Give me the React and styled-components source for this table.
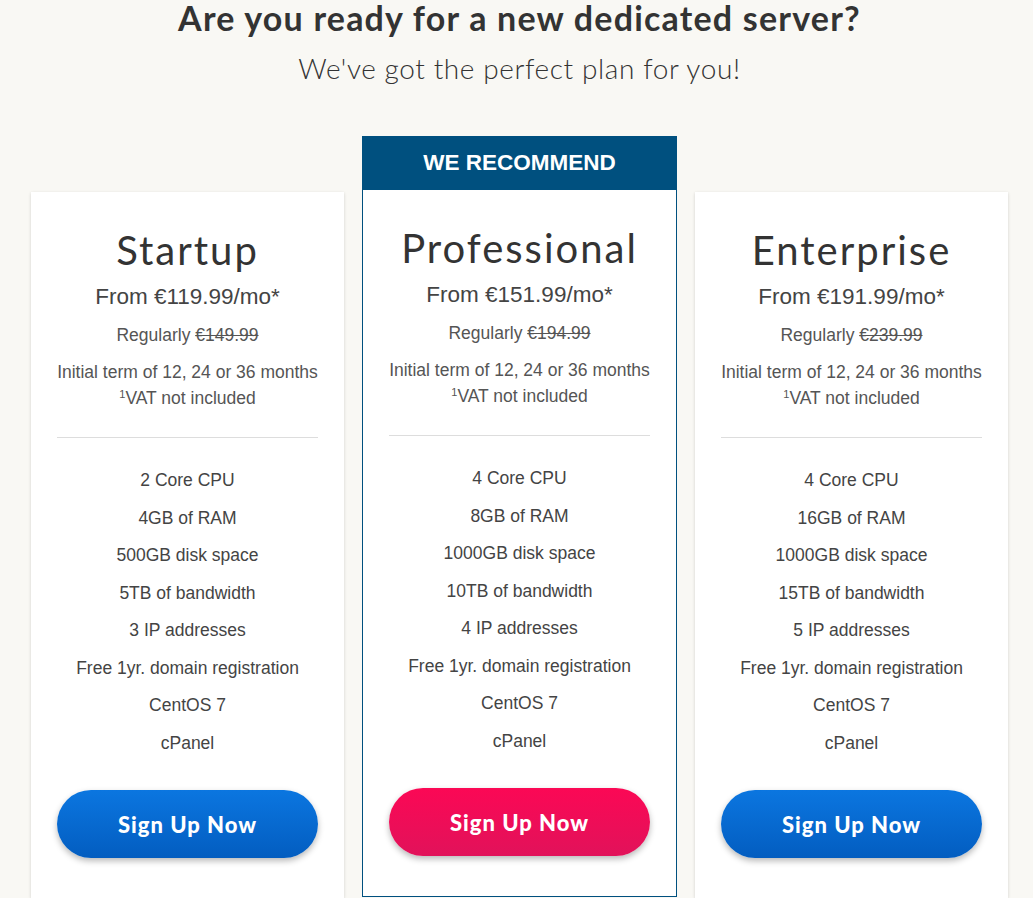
import React from 'react';
import styled, { createGlobalStyle } from 'styled-components';

const GlobalStyle = createGlobalStyle`
  html, body {
    margin: 0;
    padding: 0;
    background: #f9f8f4;
    overflow: hidden;
  }
  * {
    box-sizing: border-box;
  }
`;

const Page = styled.div`
  width: 1033px;
  height: 898px;
  overflow: hidden;
  padding: 0 25px 0 31px;
`;

const Heading = styled.h1`
  margin: -4px 0 0;
  font-family: 'Lato', 'Liberation Sans', sans-serif;
  font-weight: 700;
  font-size: 34px;
  line-height: 44px;
  color: #333;
  text-align: center;
  letter-spacing: 1.2px;
`;

const SubHeading = styled.h2`
  margin: 10px 0 0;
  font-family: 'Lato', 'Liberation Sans', sans-serif;
  font-weight: 300;
  font-size: 28px;
  line-height: 36px;
  color: #333;
  text-align: center;
  letter-spacing: 0.6px;
`;

const PlanRow = styled.div`
  margin-top: 50px;
  display: grid;
  grid-template-columns: 313px 315px 313px;
  gap: 18px;
  align-items: start;
`;

const Card = styled.div`
  background: #fff;
  margin-top: ${p => (p.$featured ? '0' : '56px')};
  border: ${p => (p.$featured ? '1px solid #00507f' : 'none')};
  box-shadow: ${p => (p.$featured ? 'none' : '0 1px 3px rgba(0, 0, 0, 0.16)')};
`;

const Banner = styled.div`
  height: 54px;
  margin: -1px -1px 0;
  background: #00507f;
  color: #fff;
  font-family: 'Liberation Sans', Arial, sans-serif;
  font-weight: 700;
  font-size: 22.5px;
  display: flex;
  align-items: center;
  justify-content: center;
`;

const Body = styled.div`
  padding: 34px 26px 40px;
  text-align: center;
  font-family: 'Liberation Sans', Arial, sans-serif;
`;

const Title = styled.h3`
  margin: 0;
  font-family: 'Lato', 'Liberation Sans', sans-serif;
  font-weight: 400;
  font-size: 40px;
  line-height: 48px;
  letter-spacing: 2px;
  color: #333;
`;

const Price = styled.div`
  margin-top: 8px;
  font-size: 22.5px;
  line-height: 29px;
  color: #444;
`;

const Regular = styled.div`
  margin-top: 12px;
  font-size: 17.5px;
  line-height: 24px;
  color: #555;

  s {
    color: #555;
  }
`;

const Terms = styled.div`
  margin-top: 12px;
  font-size: 17.5px;
  line-height: 26px;
  color: #555;

  sup {
    font-size: 11px;
    line-height: 0;
    vertical-align: 6px;
  }
`;

const Divider = styled.hr`
  margin: 26px 0 0;
  border: none;
  border-top: 1px solid #ddd;
`;

const Features = styled.ul`
  margin: 24px 0 0;
  padding: 0;
  list-style: none;
`;

const Feature = styled.li`
  font-size: 17.5px;
  line-height: 37.5px;
  color: #444;
`;

const SignUp = styled.button`
  margin-top: 28px;
  width: 100%;
  height: 68px;
  border: none;
  border-radius: 34px;
  cursor: pointer;
  color: #fff;
  font-family: 'Lato', 'Liberation Sans', sans-serif;
  font-weight: 900;
  font-size: 22px;
  letter-spacing: 1px;
  background: ${p =>
    p.$pink
      ? 'linear-gradient(180deg, #fb0855 0%, #e1125a 100%)'
      : 'linear-gradient(180deg, #0b76e0 0%, #035dc0 100%)'};
  box-shadow: 0 3px 6px rgba(0, 0, 0, 0.28);
`;

const plans = [
  {
    name: 'Startup',
    price: '€119.99',
    regular: '€149.99',
    features: ['2 Core CPU', '4GB of RAM', '500GB disk space', '5TB of bandwidth', '3 IP addresses'],
  },
  {
    name: 'Professional',
    price: '€151.99',
    regular: '€194.99',
    featured: true,
    features: ['4 Core CPU', '8GB of RAM', '1000GB disk space', '10TB of bandwidth', '4 IP addresses'],
  },
  {
    name: 'Enterprise',
    price: '€191.99',
    regular: '€239.99',
    features: ['4 Core CPU', '16GB of RAM', '1000GB disk space', '15TB of bandwidth', '5 IP addresses'],
  },
];

const extras = ['Free 1yr. domain registration', 'CentOS 7', 'cPanel'];

function PlanCard({ plan }) {
  return (
    <Card $featured={plan.featured}>
      {plan.featured ? <Banner>WE RECOMMEND</Banner> : null}
      <Body>
        <Title>{plan.name}</Title>
        <Price>From {plan.price}/mo*</Price>
        <Regular>
          Regularly <s>{plan.regular}</s>
        </Regular>
        <Terms>
          Initial term of 12, 24 or 36 months
          <br />
          <sup>1</sup>VAT not included
        </Terms>
        <Divider />
        <Features>
          {plan.features.concat(extras).map(f => (
            <Feature key={f}>{f}</Feature>
          ))}
        </Features>
        <SignUp $pink={plan.featured}>Sign Up Now</SignUp>
      </Body>
    </Card>
  );
}

export default function App() {
  return (
    <>
      <GlobalStyle />
      <Page>
        <Heading>Are you ready for a new dedicated server?</Heading>
        <SubHeading>We've got the perfect plan for you!</SubHeading>
        <PlanRow>
          {plans.map(p => (
            <PlanCard key={p.name} plan={p} />
          ))}
        </PlanRow>
      </Page>
    </>
  );
}
